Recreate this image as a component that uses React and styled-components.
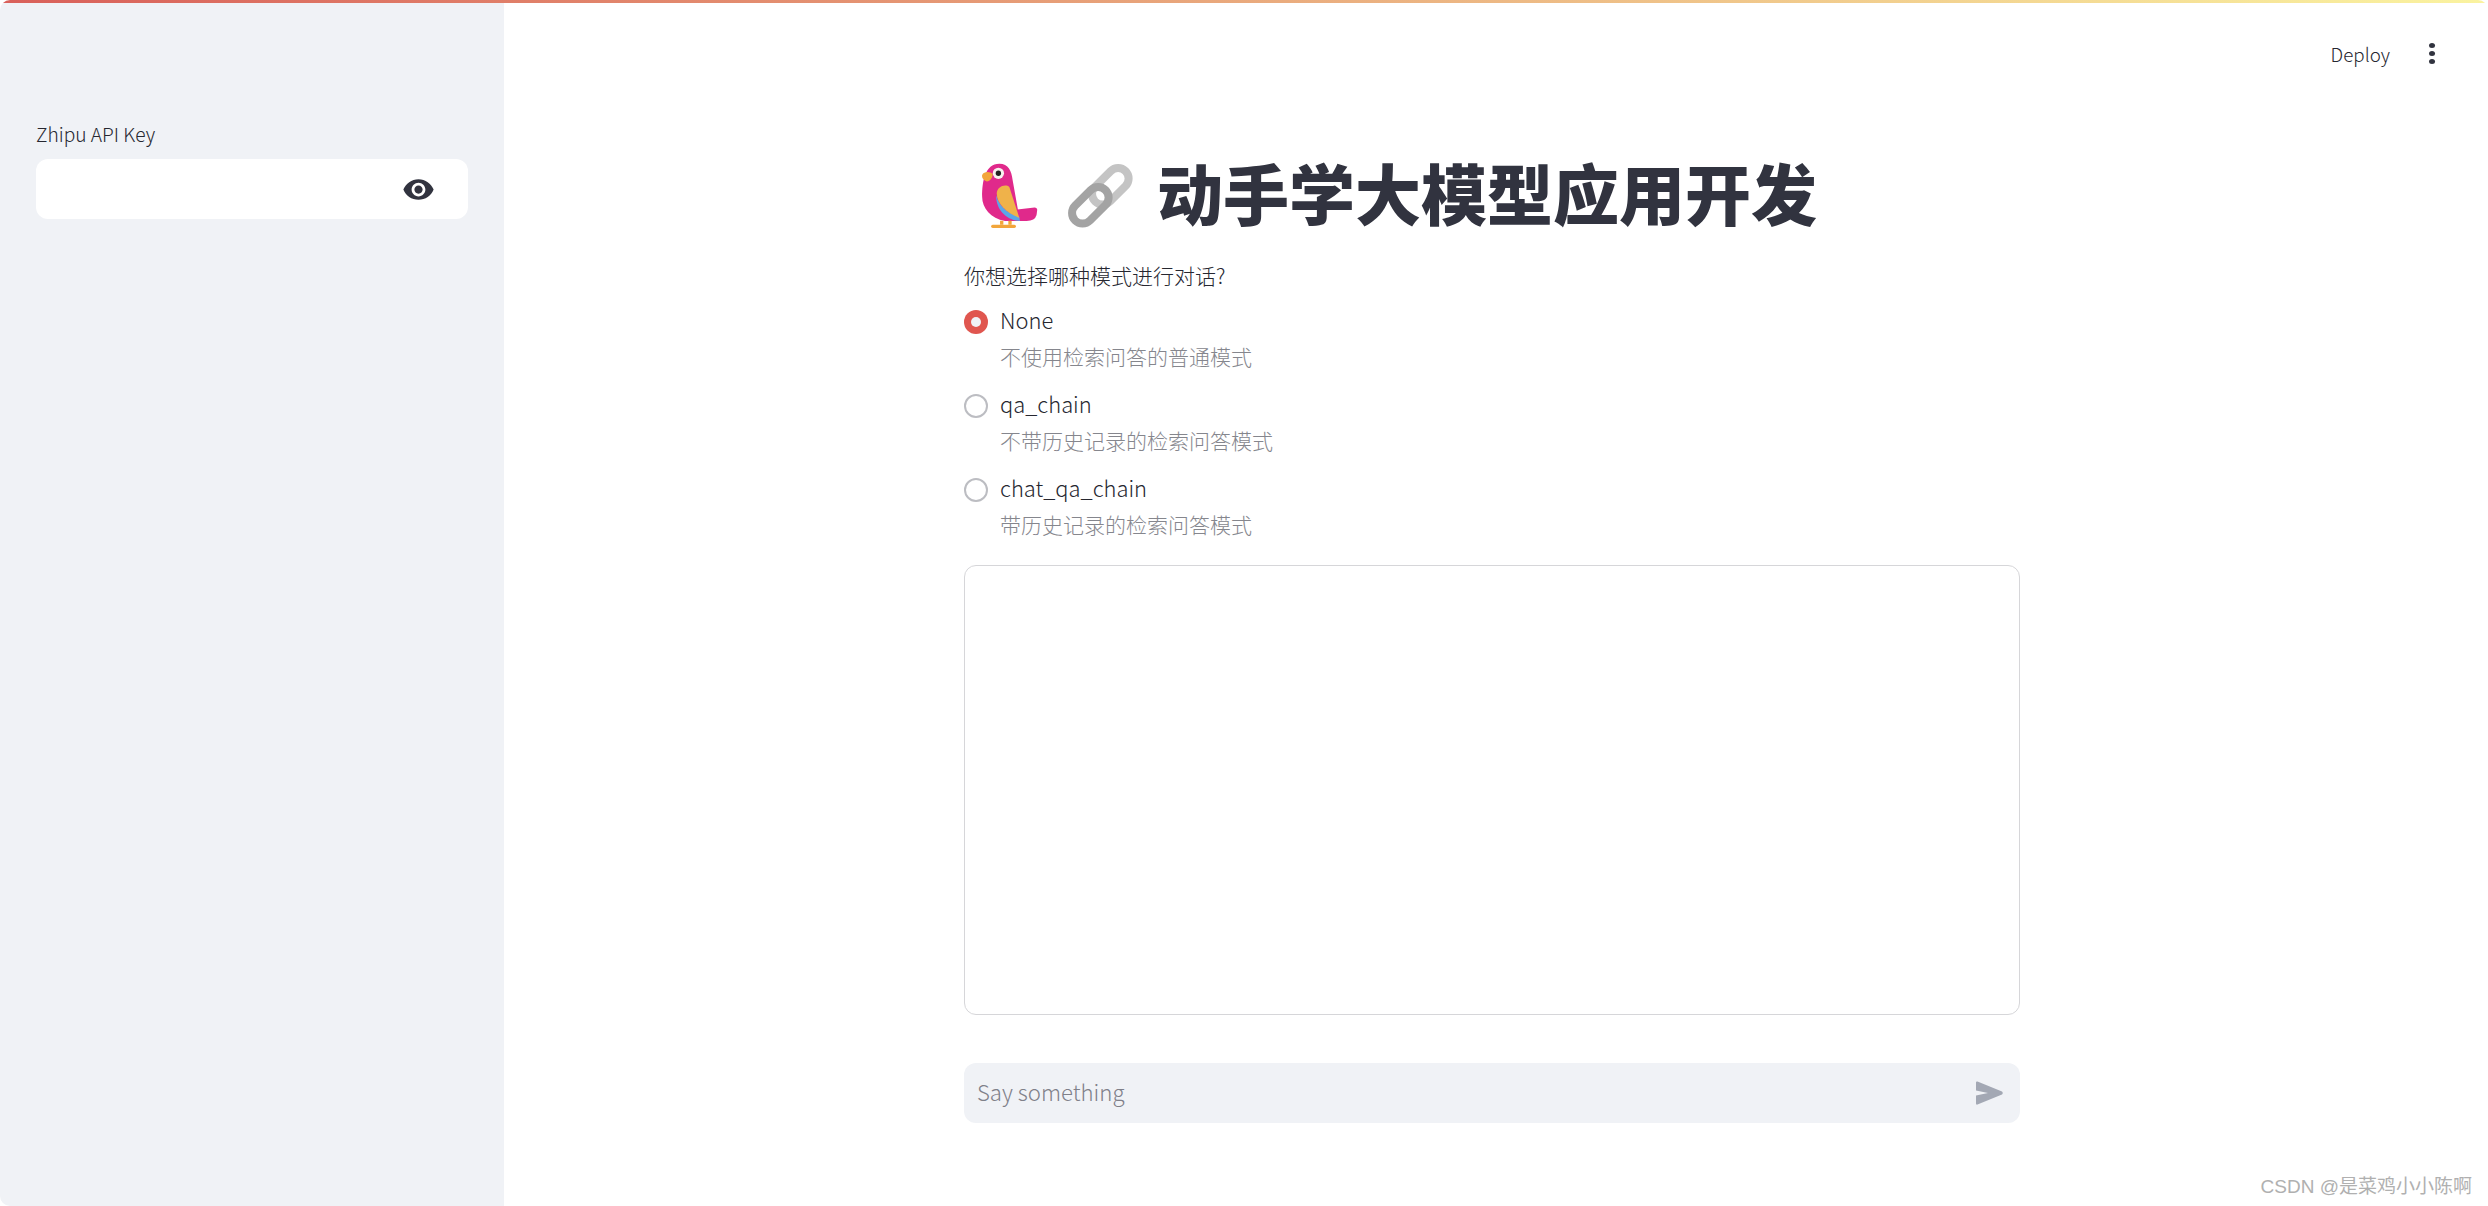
import React from 'react';
import styled, { createGlobalStyle } from 'styled-components';

const GlobalStyle = createGlobalStyle`
  html, body {
    margin: 0;
    padding: 0;
    background: #ffffff;
  }
  body {
    font-family: "Noto Sans CJK SC", "Noto Sans", sans-serif;
    color: #31333f;
  }
`;

const Page = styled.div`
  position: relative;
  width: 2488px;
  height: 1206px;
  overflow: hidden;
  border-radius: 10px;
  display: flex;
  flex-direction: column;
`;

const TopStripe = styled.div`
  height: 3px;
  flex: none;
  background: linear-gradient(90deg, #d9605a, #faf3a0);
`;

const Body = styled.div`
  flex: 1;
  display: flex;
  min-height: 0;
`;

const Sidebar = styled.aside`
  width: 504px;
  flex: none;
  box-sizing: border-box;
  padding: 118px 36px 0;
  background: #f0f2f6;
`;

const FieldLabel = styled.div`
  font-size: 19.2px;
  line-height: 27px;
  margin-bottom: 11px;
  font-weight: 300;
  color: #262730;
`;

const KeyInput = styled.div`
  height: 60px;
  border-radius: 12px;
  background: #ffffff;
  display: flex;
  align-items: center;
  justify-content: flex-end;
  padding-right: 33px;
`;

const Main = styled.main`
  flex: 1;
  min-width: 0;
  display: flex;
  flex-direction: column;
`;

const Header = styled.header`
  height: 101px;
  flex: none;
  display: flex;
  align-items: center;
  justify-content: flex-end;
  gap: 39px;
  padding-right: 53px;
  font-size: 18.8px;
  font-weight: 300;
  color: #262730;
`;

const Dots = styled.div`
  display: flex;
  flex-direction: column;
  gap: 3px;
  & span {
    width: 6px;
    height: 5px;
    border-radius: 50%;
    background: #31333f;
  }
`;

const Content = styled.div`
  width: 1056px;
  margin-left: 460px;
  display: flex;
  flex-direction: column;
`;

const Title = styled.h1`
  margin: 48px 0 2px;
  height: 78px;
  display: flex;
  align-items: center;
  font-size: 66px;
  line-height: 78px;
  font-weight: 900;
  color: #31333f;
`;

const ParrotSvg = styled.svg`
  margin: 9px 0 0 16px;
  flex: none;
`;

const LinkSvg = styled.svg`
  margin: 9px 0 0 27px;
  flex: none;
`;

const TitleText = styled.span`
  margin-left: 24px;
`;

const Question = styled.div`
  margin-top: 29px;
  font-size: 21px;
  line-height: 28px;
  font-weight: 300;
  color: #262730;
`;

const RadioList = styled.div`
  margin-top: 14px;
  display: flex;
  flex-direction: column;
`;

const RadioRow = styled.div`
  height: 84px;
  display: grid;
  grid-template-columns: 24px 1fr;
  grid-template-rows: 37px 33px;
  column-gap: 12px;
  align-items: center;
`;

const RadioDot = styled.span`
  box-sizing: border-box;
  width: 24px;
  height: 24px;
  border-radius: 50%;
  display: flex;
  align-items: center;
  justify-content: center;
  background: ${({ $checked }) => ($checked ? '#e0564f' : '#ffffff')};
  border: ${({ $checked }) => ($checked ? 'none' : '2px solid #bcbdc2')};
  &::after {
    content: '';
    display: ${({ $checked }) => ($checked ? 'block' : 'none')};
    width: 10px;
    height: 10px;
    border-radius: 50%;
    background: #f0f2f6;
  }
`;

const RadioName = styled.span`
  font-size: 21.9px;
  line-height: 34px;
  margin-bottom: 3px;
  font-weight: 300;
  color: #262730;
`;

const RadioHint = styled.span`
  grid-column: 2;
  font-size: 21px;
  line-height: 33px;
  color: #85868d;
  font-weight: 300;
`;

const ChatBox = styled.div`
  box-sizing: border-box;
  margin-top: 10px;
  height: 450px;
  border: 1px solid #d6d6d9;
  border-radius: 12px;
`;

const ChatInput = styled.div`
  margin-top: 48px;
  height: 60px;
  border-radius: 12px;
  background: #f0f2f6;
  display: flex;
  align-items: center;
  justify-content: space-between;
  padding: 0 17px 0 13px;
  font-size: 22.2px;
  color: #7f8089;
  font-weight: 300;
`;

const Placeholder = styled.span`
  margin-bottom: 5px;
`;

const Watermark = styled.div`
  position: absolute;
  right: 16px;
  bottom: 6px;
  font-family: "Liberation Sans", "Noto Sans CJK SC", sans-serif;
  font-size: 19px;
  line-height: 26px;
  color: #b0b0b0;
`;

const EyeIcon = () => (
  <svg width="33" height="33" viewBox="0 0 24 24" fill="#31333f">
    <path d="M12 4.5C7 4.5 2.73 7.61 1 12c1.73 4.39 6 7.5 11 7.5s9.27-3.11 11-7.5c-1.73-4.39-6-7.5-11-7.5zM12 17c-2.76 0-5-2.24-5-5s2.24-5 5-5 5 2.24 5 5-2.24 5-5 5zm0-8c-1.66 0-3 1.34-3 3s1.34 3 3 3 3-1.34 3-3-1.34-3-3-3z" />
  </svg>
);

const SendIcon = () => (
  <svg width="27" height="24" viewBox="0 0 27 24" fill="#a3a8b4">
    <path d="M0 1.5 Q0 0 1.5 .5 L26 10.5 Q27.5 12 26 13.5 L1.5 23.5 Q0 24 0 22.5 L0 14.5 L12 12 L0 9.5 Z" />
  </svg>
);

const ParrotIcon = () => (
  <ParrotSvg width="60" height="68" viewBox="60 35 180 205">
    <path fill="#e0298b" d="M172 178 L224 172 Q232 172 232 180 L230 195 Q225 213 200 213 L165 213 Z" />
    <path fill="#e0298b" d="M66 140 C66 95 74 40 118 40 C145 40 155 62 158 90 L180 213 L135 213 C92 205 66 175 66 140 Z" />
    <path fill="#5aa6e8" d="M108 135 C118 170 145 190 178 200 L180 213 C140 210 108 180 108 135 Z" />
    <path fill="#efb24a" d="M110 130 C110 110 135 100 148 110 L178 203 C140 190 110 160 110 130 Z" />
    <circle cx="115" cy="69" r="17" fill="#f7f2ee" />
    <circle cx="115" cy="69" r="8" fill="#222222" />
    <path fill="#f2a63b" d="M66 74 C72 62 92 64 98 72 C97 85 88 93 80 94 C72 90 64 84 66 74 Z" />
    <path fill="#f2a63b" d="M120 212 h10 v12 h-10 z M145 212 h10 v12 h-10 z" />
    <rect x="93" y="224" width="75" height="10" rx="5" fill="#f2a63b" />
  </ParrotSvg>
);

const LinkIcon = () => (
  <LinkSvg width="66" height="66" viewBox="320 38 198 198">
    <rect x="385.5" y="76.5" width="129" height="63" rx="31.5" transform="rotate(-45 450 108)" fill="none" stroke="#c4c4c4" strokeWidth="24" />
    <rect x="325.5" y="133.5" width="129" height="63" rx="31.5" transform="rotate(-45 390 165)" fill="none" stroke="#a3a3a3" strokeWidth="24" />
  </LinkSvg>
);

const modes = [
  { name: 'None', hint: '不使用检索问答的普通模式', checked: true },
  { name: 'qa_chain', hint: '不带历史记录的检索问答模式' },
  { name: 'chat_qa_chain', hint: '带历史记录的检索问答模式' },
];

export default function App() {
  return (
    <>
      <GlobalStyle />
      <Page>
        <TopStripe />
        <Body>
          <Sidebar>
            <FieldLabel>Zhipu API Key</FieldLabel>
            <KeyInput>
              <EyeIcon />
            </KeyInput>
          </Sidebar>
          <Main>
            <Header>
              <span>Deploy</span>
              <Dots>
                <span />
                <span />
                <span />
              </Dots>
            </Header>
            <Content>
              <Title>
                <ParrotIcon />
                <LinkIcon />
                <TitleText>动手学大模型应用开发</TitleText>
              </Title>
              <Question>你想选择哪种模式进行对话?</Question>
              <RadioList>
                {modes.map((mode) => (
                  <RadioRow key={mode.name}>
                    <RadioDot $checked={mode.checked} />
                    <RadioName>{mode.name}</RadioName>
                    <RadioHint>{mode.hint}</RadioHint>
                  </RadioRow>
                ))}
              </RadioList>
              <ChatBox />
              <ChatInput>
                <Placeholder>Say something</Placeholder>
                <SendIcon />
              </ChatInput>
            </Content>
          </Main>
        </Body>
        <Watermark>CSDN @是菜鸡小小陈啊</Watermark>
      </Page>
    </>
  );
}
